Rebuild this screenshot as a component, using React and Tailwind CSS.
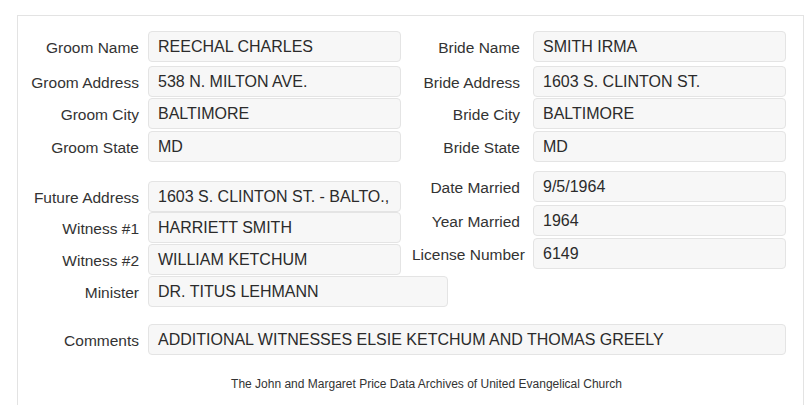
import React from "react";

const box = "h-[31px] shrink-0 border border-[#e4e4e4] bg-[#f7f7f7] rounded-[4px] pl-[9px] flex items-center text-[#2b2b2b] text-[16px] whitespace-nowrap overflow-hidden";

function Row({ label, value, labelW, gap, boxW, mt = 0 }) {
  return (
    <div className="flex items-center" style={{ marginTop: mt }}>
      <div className="shrink-0 text-right whitespace-nowrap text-[#333] pt-[3px]" style={{ width: labelW, marginRight: gap }}>
        {label}
      </div>
      <div className={box} style={{ width: boxW }}>
        {value}
      </div>
    </div>
  );
}

function L(props) {
  return <Row labelW={121} gap={9} boxW={253} {...props} />;
}
function R(props) {
  return <Row labelW={108} gap={13} boxW={253} {...props} />;
}

export default function App() {
  return (
    <div
      className="w-[805px] h-[405px] overflow-hidden bg-white text-[15.5px]"
      style={{ fontFamily: '"Liberation Sans", Arial, sans-serif' }}
    >
      <div className="ml-[17px] mt-[15px] w-[787px] h-[400px] border border-[#e3e3e3] pt-[15px]">
        {/* Section 1 */}
        <div className="flex">
          <div className="flex flex-col w-[383px] shrink-0">
            <L label="Groom Name" value="REECHAL CHARLES" />
            <L label="Groom Address" value="538 N. MILTON AVE." mt={4} />
            <L label="Groom City" value="BALTIMORE" mt={1} />
            <L label="Groom State" value="MD" mt={2} />
          </div>
          <div className="flex flex-col ml-[11px]">
            <R label="Bride Name" value="SMITH IRMA" />
            <R label="Bride Address" value="1603 S. CLINTON ST." mt={4} />
            <R label="Bride City" value="BALTIMORE" mt={1} />
            <R label="Bride State" value="MD" mt={2} />
          </div>
        </div>
        {/* Section 2 */}
        <div className="flex items-start">
          <div className="flex flex-col w-[383px] shrink-0 mt-[19px]">
            <L label="Future Address" value="1603 S. CLINTON ST. - BALTO.," />
            <L label="Witness #1" value="HARRIETT SMITH" />
            <L label="Witness #2" value="WILLIAM KETCHUM" mt={1} />
            <Row label="Minister" value="DR. TITUS LEHMANN" labelW={121} gap={9} boxW={300} mt={1} />
          </div>
          <div className="flex flex-col ml-[11px] mt-[9px]">
            <R label="Date Married" value="9/5/1964" />
            <R label="Year Married" value="1964" mt={3} />
            <R label="License Number" value="6149" mt={2} />
          </div>
        </div>
        {/* Comments */}
        <div className="mt-[17px]">
          <Row
            label="Comments"
            value="ADDITIONAL WITNESSES ELSIE KETCHUM AND THOMAS GREELY"
            labelW={121}
            gap={9}
            boxW={638}
          />
        </div>
        <div className="mt-[21px] pl-[32px] text-center text-[12px] leading-[17px] text-[#333]">
          The John and Margaret Price Data Archives of United Evangelical Church
        </div>
      </div>
    </div>
  );
}
